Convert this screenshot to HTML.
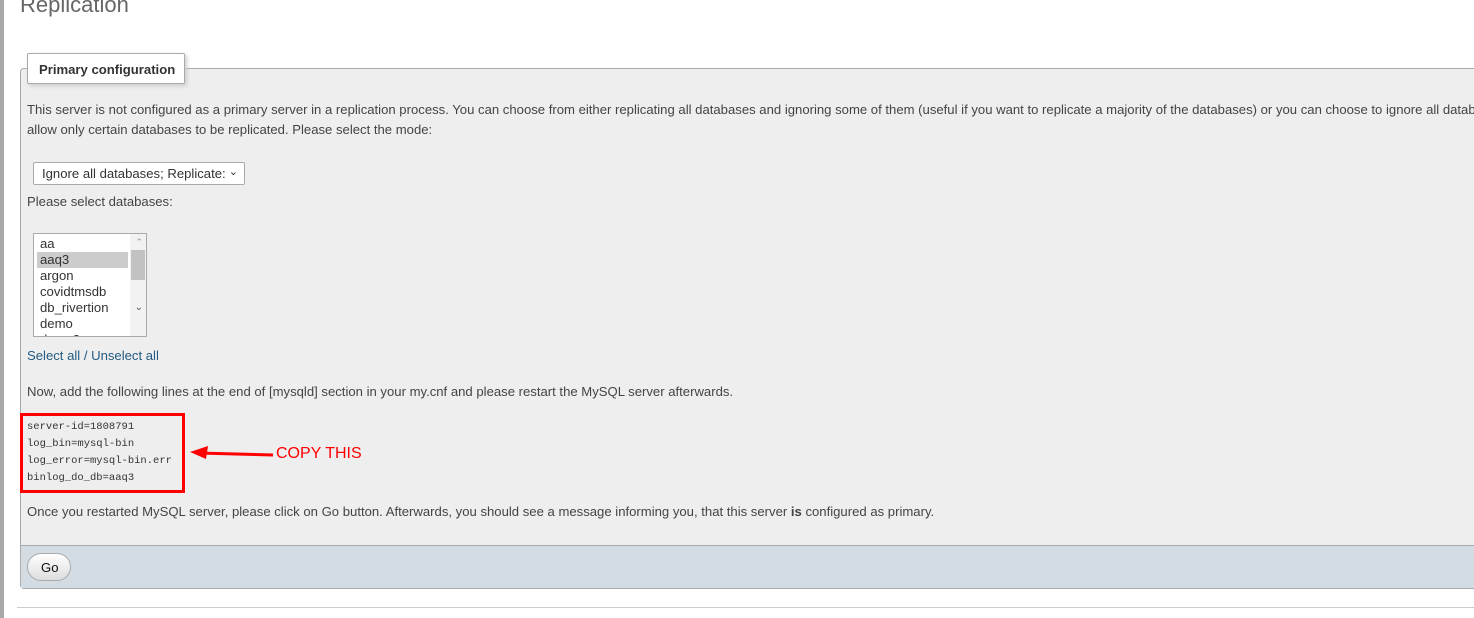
<!DOCTYPE html>
<html><head><style>
*{margin:0;padding:0;box-sizing:border-box}
html,body{width:1474px;height:618px;overflow:hidden}
body{background:#fff;font-family:"Liberation Sans",sans-serif;font-size:13.12px;color:#444;position:relative}
.a{position:absolute;white-space:nowrap}
</style></head><body>
<div class="a" style="left:0;top:0;width:4px;height:618px;background:#a8a8a8"></div>
<div class="a" style="left:20px;top:-8px;font-size:22px;color:#666">Replication</div>
<div class="a" style="left:20px;top:68px;width:1454px;height:521px;background:#eee;border:1px solid #aaa;border-right:0;border-radius:4px 0 0 4px"></div>
<div class="a" style="left:21px;top:545px;width:1453px;height:43px;background:#d3dce3;border-top:1px solid #aaa"></div>
<div class="a" style="left:27px;top:53px;width:158px;height:31px;background:#fff;border:1px solid #aaa;border-radius:2px;box-shadow:2px 2px 4px #ccc;font-weight:bold;color:#333;padding:8px 0 0 11px">Primary configuration</div>
<div class="a" style="left:27px;top:100px;line-height:20px;width:1447px;overflow:hidden">This server is not configured as a primary server in a replication process. You can choose from either replicating all databases and ignoring some of them (useful if you want to replicate a majority of the databases) or you can choose to ignore all databases by default and<br>allow only certain databases to be replicated. Please select the mode:</div>
<div class="a" style="left:33px;top:162px;width:212px;height:23px;background:#fff;border:1px solid #aaa;border-radius:2px;padding:3px 0 0 8px;color:#333">Ignore all databases; Replicate:<span style="position:absolute;right:6px;top:2px;font-size:11px">&#8964;</span></div>
<div class="a" style="left:27px;top:194px">Please select databases:</div>
<div class="a" style="left:33px;top:233px;width:114px;height:104px;background:#fff;border:1px solid #aaa;overflow:hidden;color:#333;line-height:16px;padding:2px 0 0 3px">
<div style="padding-left:3px">aa</div><div style="background:#ccc;width:91px;padding-left:3px">aaq3</div><div style="padding-left:3px">argon</div><div style="padding-left:3px">covidtmsdb</div><div style="padding-left:3px">db_rivertion</div><div style="padding-left:3px">demo</div><div style="padding-left:3px">demo2</div>
<div style="position:absolute;right:0;top:0;width:16px;height:102px;background:#f2f2f2"></div>
<div style="position:absolute;right:1px;top:16px;width:14px;height:30px;background:#c2c2c2"></div>
<div style="position:absolute;right:3px;top:0;font-size:9px;color:#999">&#8963;</div>
<div style="position:absolute;right:3px;top:66px;font-size:10px;color:#555">&#8964;</div>
</div>
<div class="a" style="left:27px;top:348px;color:#235a81">Select all / Unselect all</div>
<div class="a" style="left:27px;top:384px">Now, add the following lines at the end of [mysqld] section in your my.cnf and please restart the MySQL server afterwards.</div>
<div class="a" style="left:20px;top:413px;width:165px;height:80px;border:3px solid #f00"></div>
<div class="a" style="left:27px;top:419px;font-family:'Liberation Mono',monospace;font-size:10.5px;line-height:17px;color:#333">server-id=1808791<br>log_bin=mysql-bin<br>log_error=mysql-bin.err<br>binlog_do_db=aaq3</div>
<svg class="a" style="left:188px;top:443px" width="90" height="20"><line x1="10" y1="10" x2="85" y2="12" stroke="#f00" stroke-width="3"/><polygon points="2,9 20,3 18,16" fill="#f00"/></svg>
<div class="a" style="left:276px;top:445px;color:#f00;font-size:16px">COPY THIS</div>
<div class="a" style="left:27px;top:504px">Once you restarted MySQL server, please click on Go button. Afterwards, you should see a message informing you, that this server <b>is</b> configured as primary.</div>
<div class="a" style="left:27px;top:553px;width:44px;height:28px;border:1px solid #aaa;border-radius:14px;background:linear-gradient(#fff,#ddd);color:#111;padding:6px 0 0 13px">Go</div>
<div class="a" style="left:17px;top:607px;width:1457px;height:1px;background:#ccc"></div>
</body></html>
